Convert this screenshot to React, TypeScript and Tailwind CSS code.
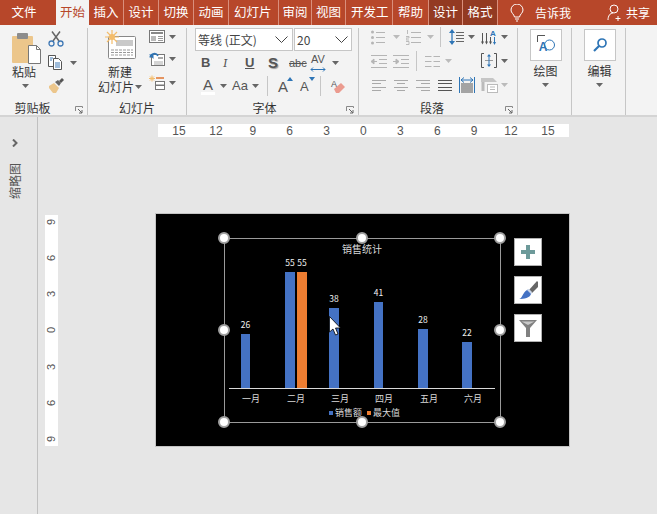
import React from "react";

const FONT = { fontFamily: '"Noto Sans CJK SC", "Liberation Sans", sans-serif' };

function Caret({ className = "" }: { className?: string }) {
  return <svg width="7" height="4" viewBox="0 0 7 4" className={"shrink-0 " + className}><path d="M0 0h7L3.500 4z" fill="#666" /></svg>;
}
function FadedCaret() {
  return <svg width="7" height="4" viewBox="0 0 7 4" className="shrink-0"><path d="M0 0h7L3.500 4z" fill="#bbb" /></svg>;
}
function Launcher() {
  return (
    <svg width="8" height="8" viewBox="0 0 8 8" className="absolute right-[4px] bottom-[1px]">
      <path d="M.5 5V.5H7.500V2" fill="none" stroke="#888" />
      <path d="M3 3l4 4M4 7h3V4" fill="none" stroke="#666" />
    </svg>
  );
}
function Lines({ w = 15, ys, c = "#a9a9a9", h = 16, lefts }: { w?: number; ys: number[]; c?: string; h?: number; lefts: [number, number][] }) {
  return (
    <svg width={w} height={h} viewBox={`0 0 ${w} ${h}`} className="shrink-0">
      {ys.map((y, i) => (
        <path key={i} d={`M${lefts[i][0]} ${y + 0.5}H${lefts[i][1]}`} stroke={c} />
      ))}
    </svg>
  );
}

function Tab({ t, w, active, dark, sep = true, clip }: { t: string; w: number; active?: boolean; dark?: boolean; sep?: boolean; clip?: boolean }) {
  return (
    <div
      className={
        "h-full flex items-center overflow-hidden whitespace-nowrap text-[12.500px] shrink-0 " +
        (clip ? "justify-start pl-[5px] " : "justify-center ") +
        (active ? "bg-[#f3f3f3] text-[#b7472a] " : dark ? "bg-[#933a22] text-white " : "text-white ") +
        (sep ? "border-r border-[#d98f7c] " : "")
      }
      style={{ width: w }}
    >
      {t}
    </div>
  );
}

function Paste() {
  return (
    <svg width="29" height="31" viewBox="0 0 29 31">
      <rect x="0" y="3" width="21" height="27" rx="1" fill="#ecc68b" />
      <rect x="5" y="0" width="11" height="6" rx="1" fill="#8d8d8d" />
      <path d="M16.500 12.500h8l4 4v14h-12z" fill="#fff" stroke="#777" />
      <path d="M24.500 12.500v4h4" fill="none" stroke="#777" />
    </svg>
  );
}
function Scissors() {
  return (
    <svg width="16" height="16" viewBox="0 0 16 16" fill="none">
      <path d="M5 10L12 .5M11 10L4 .5" stroke="#666" strokeWidth="1.500" />
      <circle cx="3.500" cy="12.500" r="2.500" stroke="#3f78b5" strokeWidth="1.300" />
      <circle cx="12.500" cy="12.500" r="2.500" stroke="#3f78b5" strokeWidth="1.300" />
    </svg>
  );
}
function CopyIcon() {
  return (
    <svg width="15" height="15" viewBox="0 0 15 15" fill="none">
      <path d="M.5.500h7v11h-7z" fill="#fff" stroke="#555" />
      <path d="M5.500 3.500h5l3 3v8h-8z" fill="#fff" stroke="#555" />
      <path d="M2 3h3M2 5h2M7 8h5M7 10h5M7 12h5" stroke="#3f78b5" />
    </svg>
  );
}
function Brush() {
  return (
    <svg width="16" height="15" viewBox="0 0 16 15">
      <path d="M1 8l5-3 5 5-3 5H5L1 10z" fill="#ecc68b" />
      <path d="M7 4l3-2 3 3-2 3z" fill="#666" />
      <path d="M11 3l3-3 2 2-3 3z" fill="#555" />
    </svg>
  );
}
function NewSlide() {
  return (
    <svg width="31" height="29" viewBox="0 0 31 29" fill="none">
      <rect x="3.500" y="6.500" width="27" height="22" rx="1" fill="#fff" stroke="#888" />
      <rect x="11" y="10" width="17" height="6" fill="#c9c9c9" />
      <path d="M6 20h22M6 22.500h22M6 25h22" stroke="#999" strokeDasharray="3 1" />
      <circle cx="7" cy="7" r="3" fill="#f4bd6b" />
      <path d="M7 0v14M0 7h14M2 2l10 10M12 2L2 12" stroke="#f4bd6b" strokeWidth="1.200" />
    </svg>
  );
}
function LayoutIcon() {
  return (
    <svg width="16" height="13" viewBox="0 0 16 13" fill="none">
      <rect x=".5" y=".5" width="15" height="12" fill="#fff" stroke="#777" />
      <rect x="2" y="2" width="12" height="2" fill="#888" />
      <rect x="2" y="6" width="5" height="5" fill="#b9b9b9" />
      <path d="M9 6.500h5M9 8.500h5M9 10.500h5" stroke="#999" />
    </svg>
  );
}
function ResetIcon() {
  return (
    <svg width="16" height="14" viewBox="0 0 16 14" fill="none">
      <rect x="2.500" y="2.500" width="13" height="11" fill="#fff" stroke="#777" />
      <rect x="9" y="5" width="5" height="2" fill="#aaa" />
      <path d="M5 10h9M5 12h9" stroke="#aaa" />
      <path d="M1 5.500C2 1.500 7 0 9 4" stroke="#2e75b6" strokeWidth="1.500" />
      <path d="M0 2.500h4.500v4.500z" fill="#2e75b6" />
    </svg>
  );
}
function SectionIcon() {
  return (
    <svg width="16" height="15" viewBox="0 0 16 15" fill="none">
      <path d="M3 .5v6M0 3.500h6M1 1.500l4 4M5 1.500l-4 4" stroke="#f4bd6b" />
      <path d="M7 3h8" stroke="#e0752f" strokeWidth="1.500" />
      <rect x="6.500" y="6.500" width="9" height="3.500" fill="#fff" stroke="#777" />
      <rect x="6.500" y="10.500" width="9" height="4" fill="#fff" stroke="#777" />
    </svg>
  );
}
function AlignRows({ kind }: { kind: "l" | "c" | "r" | "j" }) {
  const m: Record<string, [number, number][]> = {
    l: [[0, 14], [0, 9], [0, 14], [0, 9]],
    c: [[0, 14], [3, 11], [0, 14], [3, 11]],
    r: [[0, 14], [5, 14], [0, 14], [5, 14]],
    j: [[0, 14], [0, 14], [0, 14], [0, 14]],
  };
  return <Lines w={14} h={13} ys={[1, 4, 8, 11]} lefts={m[kind]} c={kind === "j" ? "#555" : "#a9a9a9"} />;
}

function BulletIcon() {
  return (
    <svg width="14" height="15" viewBox="0 0 14 15">
      <circle cx="1.500" cy="2" r="1.500" fill="#b5b5b5" /><circle cx="1.500" cy="7.500" r="1.500" fill="#b5b5b5" /><circle cx="1.500" cy="13" r="1.500" fill="#b5b5b5" />
      <path d="M5 2.500h9M5 7.500h9M5 12.500h9" stroke="#b5b5b5" />
    </svg>
  );
}
function NumberIcon() {
  return (
    <svg width="15" height="15" viewBox="0 0 15 15">
      <path d="M1.500 0v4M0 6.500h3v1.500H0v2h3M0 11.500h3v3H0" fill="none" stroke="#b5b5b5" strokeWidth=".9" />
      <path d="M5 2.500h10M5 7.500h10M5 12.500h10" stroke="#b5b5b5" />
    </svg>
  );
}
function LineSpacing() {
  return (
    <svg width="15" height="16" viewBox="0 0 15 16" fill="none">
      <path d="M3 2v12" stroke="#2e75b6" strokeWidth="1.300" />
      <path d="M0 4l3-4 3 4zM0 12l3 4 3-4z" fill="#2e75b6" />
      <path d="M7 3.500h8M7 6.500h8M7 9.500h8M7 12.500h8" stroke="#666" />
    </svg>
  );
}
function TextDir() {
  return (
    <svg width="16" height="16" viewBox="0 0 16 16" fill="none">
      <path d="M1.500 4v10M5.500 4v10M9.500 8v6" stroke="#555" />
      <path d="M0 12.500l1.500 3 1.500-3zM4 12.500l1.500 3 1.500-3zM8 12.500l1.500 3 1.500-3z" fill="#555" />
      <path d="M13.500 8v7" stroke="#2e75b6" />
      <path d="M12 13l1.500 3 1.500-3z" fill="#2e75b6" />
      <text x="12" y="7" fontSize="8" fontWeight="700" fill="#2e75b6" textAnchor="middle" style={{ fontFamily: "Liberation Sans" }}>A</text>
    </svg>
  );
}
function AlignText() {
  return (
    <svg width="16" height="16" viewBox="0 0 16 16" fill="none">
      <path d="M3 .5H.5v14H3M13 .5h2.500v14H13" stroke="#555" />
      <path d="M4 7.500h8" stroke="#999" />
      <path d="M8 2v11" stroke="#2e75b6" />
      <path d="M6 3.500L8 1l2 2.500zM6 11.500L8 14l2-2.500z" fill="#2e75b6" />
    </svg>
  );
}
function Distributed() {
  return (
    <svg width="16" height="16" viewBox="0 0 16 16" fill="none">
      <path d="M.5 0v16M15.500 0v16" stroke="#2e75b6" />
      <path d="M2 3h12" stroke="#2e75b6" />
      <path d="M5 .5L2 3l3 2.500M11 .5L14 3l-3 2.500" stroke="#2e75b6" />
      <path d="M2 7h12M2 9h12M2 11h12M2 13h12M2 15h12" stroke="#555" />
    </svg>
  );
}
function SmartArt() {
  return (
    <svg width="17" height="15" viewBox="0 0 17 15" fill="none">
      <path d="M0 0h12l4 4H0z" fill="#c6c6c6" />
      <path d="M2 4v9" stroke="#bbb" strokeWidth="3" />
      <rect x="6.500" y="6.500" width="10" height="8" fill="#fff" stroke="#bbb" />
      <path d="M9 9h5M9 11.500h5" stroke="#bbb" />
    </svg>
  );
}
function IndentIcon({ inc }: { inc?: boolean }) {
  return (
    <svg width="16" height="13" viewBox="0 0 16 13">
      <path d="M0 .5h16M8 4.500h8M8 8.500h8M0 12.500h16" stroke="#b5b5b5" />
      <path d={inc ? "M0 6.500h3M3 4l3 2.500-3 2.500z" : "M3 6.500h3M3 4L0 6.500 3 9z"} fill="#b5b5b5" stroke="#b5b5b5" />
    </svg>
  );
}
function ColsIcon() {
  return (
    <svg width="15" height="11" viewBox="0 0 15 11">
      <path d="M0 .5h6.500M0 5.500h6.500M0 10.500h6.500M8.500 .5H15M8.500 5.500H15M8.500 10.500H15" stroke="#b5b5b5" />
    </svg>
  );
}
function GrowA({ down, size }: { down?: boolean; size: number }) {
  return (
    <div className="relative w-[16px] h-[18px] leading-[20px] text-[#555]" style={{ fontFamily: "Liberation Sans", fontSize: size }}>
      A
      <svg width="6" height="4" viewBox="0 0 6 4" className="absolute right-[1px] top-0">
        <path d={down ? "M0 0h6L3 4z" : "M0 4h6L3 0z"} fill="#2e75b6" />
      </svg>
    </div>
  );
}

function DrawShapes() {
  return (
    <svg width="18" height="21" viewBox="0 0 18 21" fill="none">
      <path d="M8 .5H.5V7" stroke="#555" />
      <circle cx="12.500" cy="10" r="5" stroke="#2e75b6" fill="#fff" />
      <text x="6" y="16" fontSize="12" fontWeight="700" fill="#2e75b6" textAnchor="middle" style={{ fontFamily: "Liberation Sans" }}>A</text>
    </svg>
  );
}
function FindIcon() {
  return (
    <svg width="14" height="14" viewBox="0 0 14 14" fill="none">
      <circle cx="9" cy="5" r="4" stroke="#2e75b6" strokeWidth="1.700" />
      <path d="M6 8l-5 5" stroke="#2e75b6" strokeWidth="2.200" />
    </svg>
  );
}

function Group({ w, label, launcher, labelPr = 0, children }: { w: number; label: string; launcher?: boolean; labelPr?: number; children: React.ReactNode }) {
  return (
    <div className="relative h-full shrink-0 flex flex-col border-r border-[#c6c6c6]" style={{ width: w }}>
      <div className="flex-1 min-h-0">{children}</div>
      <div className="h-[14px] text-center text-[12px] leading-[14px] text-[#333] whitespace-nowrap" style={{ paddingRight: labelPr }}>{label}</div>
      {launcher && <Launcher />}
    </div>
  );
}

function Handle({ x, y }: { x: number; y: number }) {
  return <circle cx={x} cy={y} r="5" fill="#fff" stroke="#a0a0a0" strokeWidth="2" />;
}

function SideButton({ children }: { children: React.ReactNode }) {
  return <div className="w-[28px] h-[28px] bg-white border border-[#b0b0b0] flex items-center justify-center">{children}</div>;
}

const bars: [number, number, number, string][] = [
  [241, 9, 334, "26"],
  [285, 10, 272, "55"],
  [329, 10, 308, "38"],
  [374, 9, 302, "41"],
  [418, 10, 329, "28"],
  [462, 10, 342, "22"],
];
const cats: [string, number][] = [["一月", 251], ["二月", 296], ["三月", 340], ["四月", 384], ["五月", 429], ["六月", 473]];

export default function App() {
  const rulerH = ["15", "12", "9", "6", "3", "0", "3", "6", "9", "12", "15"];
  const rulerV = ["9", "6", "3", "0", "3", "6", "9"];
  return (
    <div className="w-[657px] h-[514px] overflow-hidden flex flex-col bg-[#e6e6e6]" style={FONT}>
      {/* tabs */}
      <div className="h-[25px] shrink-0 bg-[#b7472a] flex items-center">
        <div className="w-[56px] h-full flex items-center justify-center text-white text-[12.500px] pr-[8px]">文件</div>
        <Tab t="开始" w={33} active sep={false} />
        <Tab t="插入" w={35} />
        <Tab t="设计" w={35} />
        <Tab t="切换" w={35} />
        <Tab t="动画" w={35} />
        <Tab t="幻灯片" w={50} clip />
        <Tab t="审阅" w={33} />
        <Tab t="视图" w={34} />
        <Tab t="开发工" w={47} clip />
        <Tab t="帮助" w={36} />
        <Tab t="设计" w={34} dark />
        <Tab t="格式" w={35} dark />
        <div className="flex items-center">
          <svg width="14" height="18" viewBox="0 0 14 18" fill="none" className="ml-[12px]">
            <path d="M4.500 13C4 10 1 9 1 6a6 6 0 0 1 12 0c0 3-3 4-3.500 7z" stroke="#fff" />
            <path d="M5 15h4M6 17h2" stroke="#fff" />
          </svg>
          <span className="ml-[11px] text-white text-[12px]">告诉我</span>
          <svg width="15" height="18" viewBox="0 0 15 18" fill="none" className="ml-[36px]">
            <circle cx="7" cy="5" r="4" stroke="#fff" />
            <path d="M1 16c0-4 2-7 5-7M11 12v5M8.500 14.500h5" stroke="#fff" />
          </svg>
          <span className="ml-[4px] text-white text-[12px] whitespace-nowrap">共享</span>
        </div>
      </div>

      {/* ribbon */}
      <div className="h-[92px] shrink-0 bg-[#f3f3f3] border-b-2 border-[#d4d4d4] flex pt-[3px]">
        <Group w={88} label="剪贴板" launcher labelPr={22}>
          <div className="flex pl-[12px] pt-[3px]">
            <div className="w-[29px] flex flex-col items-start pt-[2px]">
              <Paste />
              <span className="text-[12px] leading-[16px] text-[#333] whitespace-nowrap">粘贴</span>
              <Caret className="mt-[4px] ml-[10px]" />
            </div>
            <div className="ml-[7px] flex flex-col gap-[8px]">
              <Scissors />
              <div className="flex items-center gap-[7px]"><CopyIcon /><Caret /></div>
              <Brush />
            </div>
          </div>
        </Group>
        <Group w={99} label="幻灯片">
          <div className="flex pl-[8px] pt-[2px]">
            <div className="w-[48px] flex flex-col items-center">
              <NewSlide />
              <span className="text-[12px] leading-[15px] mt-[5px] text-[#333]">新建</span>
              <span className="text-[12px] leading-[15px] flex items-center gap-[1px] text-[#333] whitespace-nowrap">幻灯片<Caret /></span>
            </div>
            <div className="ml-[5px] flex flex-col gap-[9px]">
              <div className="flex items-center gap-[4px]"><LayoutIcon /><Caret /></div>
              <div className="flex items-center gap-[4px]"><ResetIcon /><Caret /></div>
              <div className="flex items-center gap-[4px]"><SectionIcon /><Caret /></div>
            </div>
          </div>
        </Group>
        <Group w={172} label="字体" launcher labelPr={16}>
          <div className="pl-[8px] flex flex-col">
            <div className="flex gap-[1px] w-[157px] h-[23px]">
              <div className="w-[98px] bg-white border border-[#c6c6c6] flex items-center justify-between pl-[2px] pr-[4px]">
                <span className="text-[12px] text-[#444] whitespace-nowrap">等线 (正文)</span>
                <svg width="13" height="7" viewBox="0 0 13 7" fill="none"><path d="M.5.500L6.500 6.500l6-6" stroke="#444" /></svg>
              </div>
              <div className="w-[58px] bg-white border border-[#c6c6c6] flex items-center justify-between pl-[2px] pr-[3px]">
                <span className="text-[12px] text-[#444]">20</span>
                <svg width="13" height="7" viewBox="0 0 13 7" fill="none"><path d="M.5.500L6.500 6.500l6-6" stroke="#444" /></svg>
              </div>
            </div>
            <div className="flex items-center h-[22px] mt-[1px] pl-[6px] text-[#555] text-[13px]" style={{ fontFamily: "Liberation Sans" }}>
              <b className="w-[22px]">B</b>
              <i className="w-[22px] font-serif">I</i>
              <u className="w-[23px] font-bold">U</u>
              <b className="w-[21px] text-[15px] [text-shadow:1px_1px_1px_#999]">S</b>
              <s className="w-[20px] text-[11px]">abc</s>
              <div className="relative w-[18px] h-[20px] text-[11px] leading-[13px] text-center">
                AV
                <svg width="16" height="5" viewBox="0 0 16 5" className="absolute left-[1px] bottom-[1px]" fill="none"><path d="M1 2.500h14M3 .5l-2 2 2 2M13 .5l2 2-2 2" stroke="#2e75b6" /></svg>
              </div>
              <Caret className="ml-[5px]" />
            </div>
            <div className="flex items-center h-[22px] mt-[1px] pl-[6px] text-[#555]" style={{ fontFamily: "Liberation Sans" }}>
              <div className="w-[14px] text-[15px] leading-[15px] text-center border-b-[3px] border-white">A</div>
              <Caret className="ml-[5px]" />
              <span className="ml-[5px] text-[13px]">Aa</span>
              <Caret className="ml-[4px]" />
              <div className="ml-[8px] w-px h-[20px] bg-[#c6c6c6]" />
              <div className="ml-[10px]"><GrowA size={15} /></div>
              <div className="ml-[6px]"><GrowA down size={13} /></div>
              <div className="ml-[4px] w-px h-[20px] bg-[#c6c6c6]" />
              <svg width="16" height="15" viewBox="0 0 16 15" className="ml-[9px]">
                <text x="1" y="8" fontSize="9" fill="#555" style={{ fontFamily: "Liberation Sans" }}>A</text>
                <path d="M4 10l7-6 4 4-6 6H6z" fill="#eb9b8f" />
              </svg>
            </div>
          </div>
        </Group>
        <Group w={159} label="段落" launcher labelPr={12}>
          <div className="pl-[12px] flex flex-col gap-[8px] pt-[1px]">
            <div className="flex items-center h-[16px]">
              <BulletIcon /><div className="ml-[8px]"><FadedCaret /></div>
              <div className="ml-[6px]"><NumberIcon /></div><div className="ml-[6px]"><FadedCaret /></div>
              <div className="ml-[6px] w-px h-[20px] bg-[#c6c6c6]" />
              <div className="ml-[8px]"><LineSpacing /></div><div className="ml-[4px]"><Caret /></div>
              <div className="ml-[6px]"><TextDir /></div><div className="ml-[4px]"><Caret /></div>
            </div>
            <div className="flex items-center h-[16px]">
              <IndentIcon /><div className="ml-[6px]"><IndentIcon inc /></div>
              <div className="ml-[7px] w-px h-[20px] bg-[#c6c6c6]" />
              <div className="ml-[8px]"><ColsIcon /></div><div className="ml-[5px]"><FadedCaret /></div>
              <div className="ml-[29px]"><AlignText /></div><div className="ml-[4px]"><Caret /></div>
            </div>
            <div className="flex items-center h-[16px] pl-[1px]">
              <AlignRows kind="l" /><div className="ml-[8px]"><AlignRows kind="c" /></div>
              <div className="ml-[8px]"><AlignRows kind="r" /></div><div className="ml-[8px]"><AlignRows kind="j" /></div>
              <div className="ml-[7px]"><Distributed /></div><div className="ml-[6px]"><SmartArt /></div>
              <div className="ml-[3px]"><FadedCaret /></div>
            </div>
          </div>
        </Group>
        <Group w={54} label="">
          <div className="flex flex-col items-center pt-[1px] pl-[2px]">
            <div className="w-[32px] h-[32px] bg-white border border-[#c6c6c6] flex items-center justify-center"><DrawShapes /></div>
            <span className="text-[12px] leading-[16px] mt-[2px] text-[#333]">绘图</span>
            <Caret className="mt-[4px]" />
          </div>
        </Group>
        <Group w={54} label="">
          <div className="flex flex-col items-center pt-[1px] pl-[2px]">
            <div className="w-[32px] h-[32px] bg-white border border-[#c6c6c6] flex items-center justify-center"><FindIcon /></div>
            <span className="text-[12px] leading-[16px] mt-[2px] text-[#333]">编辑</span>
            <Caret className="mt-[4px]" />
          </div>
        </Group>
      </div>

      {/* workspace */}
      <div className="flex-1 min-h-0 flex">
        <div className="w-[38px] shrink-0 border-r border-[#c0c0c0] flex flex-col items-start pl-[9px] pt-[22px]">
          <svg width="6" height="8" viewBox="0 0 6 8" fill="none" className="ml-[3px]"><path d="M1 .5L4.500 4 1 7.500" stroke="#666" strokeWidth="2" /></svg>
          <div className="mt-[16px] text-[12px] leading-[12px] text-[#555] [writing-mode:vertical-rl] [text-orientation:sideways] rotate-180">缩略图</div>
        </div>
        <div className="flex-1 min-w-0 flex flex-col">
          <div className="ml-[120px] mt-[7px] w-[411px] h-[13px] bg-white flex items-center justify-between px-[16px] text-[12px] text-[#555]" style={{ fontFamily: "Liberation Sans" }}>
            {rulerH.map((n, i) => <span key={i} className="w-[10px] flex justify-center">{n}</span>)}
          </div>
          <div className="flex mt-[76px] items-start">
            <div className="ml-[7px] mt-[2px] w-[13px] h-[231px] bg-white flex flex-col justify-between items-center py-[1px] text-[11px] text-[#555]" style={{ fontFamily: "Liberation Sans" }}>
              {rulerV.map((n, i) => <span key={i} className="h-[12px] leading-[12px] -rotate-90">{n}</span>)}
            </div>
            <div className="relative ml-[97px] w-[415px] h-[234px] bg-black border border-[#c4c4c4] shrink-0">
              <svg width="413" height="232" viewBox="156 214 413 232" style={FONT} className="block">
                <rect x="224.500" y="238.500" width="276" height="184" fill="none" stroke="#9a9a9a" />
                <text x="362" y="253" fontSize="10" fill="#d9d9d9" textAnchor="middle">销售统计</text>
                {bars.map(([x, w, top, v], i) => (
                  <g key={i}>
                    <rect x={x} y={top} width={w} height={388 - top} fill="#4472c4" />
                    <text x={x + w / 2} y={top - 6} fontSize="8.500" fill="#f0f0f0" textAnchor="middle">{v}</text>
                  </g>
                ))}
                <rect x="297" y="272" width="10" height="116" fill="#ed7d31" />
                <text x="302" y="266" fontSize="8.500" fill="#f0f0f0" textAnchor="middle">55</text>
                <path d="M229 388.500H495" stroke="#d9d9d9" />
                {cats.map(([t, x]) => (
                  <text key={t} x={x} y="402" fontSize="9" fill="#d9d9d9" textAnchor="middle">{t}</text>
                ))}
                <rect x="329" y="411" width="4" height="4" fill="#4472c4" />
                <text x="335" y="416" fontSize="9" fill="#d9d9d9">销售额</text>
                <rect x="367" y="411" width="4" height="4" fill="#ed7d31" />
                <text x="373" y="416" fontSize="9" fill="#d9d9d9">最大值</text>
                <Handle x={224} y={238} /><Handle x={362} y={238} /><Handle x={500} y={238} />
                <Handle x={224} y={330} /><Handle x={500} y={330} />
                <Handle x={224} y={422} /><Handle x={362} y={422} /><Handle x={500} y={422} />
                <path d="M329.500 316.500v15.500l3.500-3 2.500 6 2.500-1-2.500-6h5z" fill="#fff" stroke="#000" strokeWidth=".8" />
              </svg>
              <div className="absolute left-[358px] top-[24px] flex flex-col gap-[10px]">
                <SideButton>
                  <svg width="14" height="14" viewBox="0 0 14 14"><path d="M5 0h4v5h5v4H9v5H5V9H0V5h5z" fill="#6d9a9a" /></svg>
                </SideButton>
                <SideButton>
                  <svg width="19" height="19" viewBox="0 0 19 19">
                    <path d="M10 9l8-9 1 1v5l-6 6z" fill="#666" />
                    <path d="M0 18c3 0 4-7 8-9 2-1 5 2 4 4-1 4-7 5-12 5z" fill="#4472c4" />
                    <path d="M8 9l2-1 3 3-1 2z" fill="#c9d6ea" />
                  </svg>
                </SideButton>
                <SideButton>
                  <svg width="18" height="17" viewBox="0 0 18 17"><path d="M0 0h18l-7 8v9H7V8z" fill="#808080" /><path d="M2.500 1.500h13L9 5z" fill="#c9c9c9" /></svg>
                </SideButton>
              </div>
            </div>
          </div>
        </div>
      </div>
    </div>
  );
}
